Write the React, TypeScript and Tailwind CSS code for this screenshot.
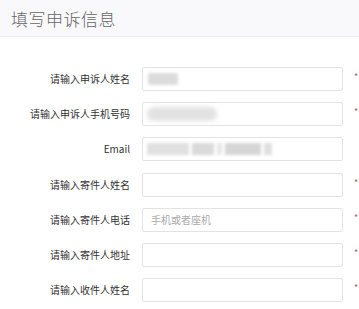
import React from "react";

interface Field {
  label: string;
  required: boolean;
  placeholder?: string;
  blur?: React.ReactNode;
}

const fields: Field[] = [
  {
    label: "请输入申诉人姓名",
    required: true,
    blur: <div className="ml-[5px] h-[12px] w-[30px] rounded-[2px] bg-[#dcdcdc] blur-[1.5px]" />,
  },
  {
    label: "请输入申诉人手机号码",
    required: true,
    blur: <div className="ml-[4px] h-[14px] w-[70px] rounded-full bg-[#e2e2e2] blur-[2px]" />,
  },
  {
    label: "Email",
    required: false,
    blur: (
      <div className="ml-[4px] flex items-center gap-[3px] blur-[1.5px]">
        <div className="h-[12px] w-[42px] bg-[#e0e0e0]" />
        <div className="h-[12px] w-[22px] bg-[#dadada]" />
        <div className="h-[12px] w-[5px] bg-[#e6e6e6]" />
        <div className="h-[12px] w-[36px] bg-[#d6d6d6]" />
        <div className="h-[12px] w-[8px] bg-[#e0e0e0]" />
      </div>
    ),
  },
  { label: "请输入寄件人姓名", required: true },
  { label: "请输入寄件人电话", required: true, placeholder: "手机或者座机" },
  { label: "请输入寄件人地址", required: true },
  { label: "请输入收件人姓名", required: true },
];

export default function App() {
  return (
    <div
      className="w-[359px] h-[309px] overflow-hidden bg-white"
      style={{ fontFamily: '"Noto Sans CJK SC", "Noto Sans", sans-serif' }}
    >
      {/* Header */}
      <div className="h-[37px] bg-[#f9f9fb] border-b border-[#ececf0] flex items-center pl-[11px]">
        <h1 className="text-[17px] font-light leading-none text-[#666] tracking-[0.5px]">填写申诉信息</h1>
      </div>

      {/* Form */}
      <div className="pt-[30px] flex flex-col gap-[11.2px]">
        {fields.map((f) => (
          <div key={f.label} className="flex items-center h-[24px]">
            <label className="w-[130px] text-right text-[10px] leading-none text-[#333]">{f.label}</label>
            <div className="ml-[12px] w-[201px] h-[24px] border border-[#e3e3e3] rounded-[2px] flex items-center bg-white">
              {f.blur}
              {f.placeholder && (
                <span className="pl-[8px] text-[10px] leading-none text-[#aaa]">{f.placeholder}</span>
              )}
            </div>
            {f.required && (
              <span className="ml-[11px] -mt-[5px] text-[9px] leading-none text-[#a86565]">*</span>
            )}
          </div>
        ))}
      </div>
    </div>
  );
}
